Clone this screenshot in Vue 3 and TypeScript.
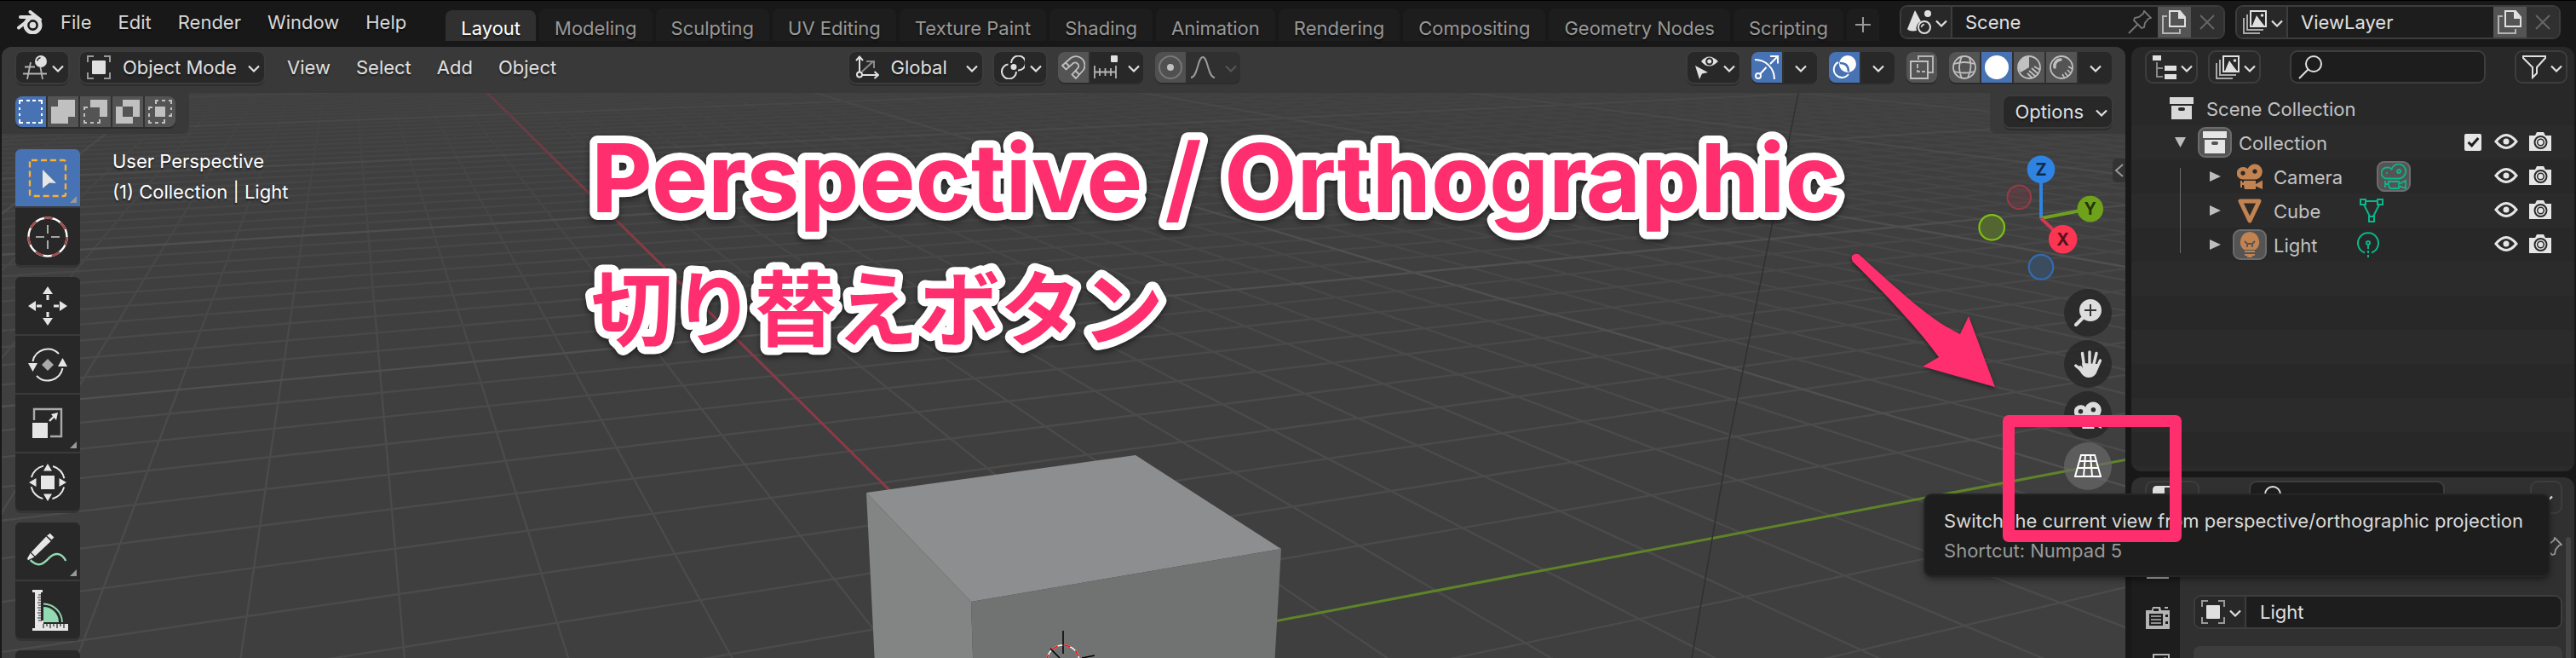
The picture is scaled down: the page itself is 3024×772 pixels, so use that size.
<script setup lang="ts">
import { ref } from 'vue'

interface Segment { x1: number; y1: number; x2: number; y2: number }
interface Tool { icon: string; label: string; more?: boolean }
interface OutlinerRow { name: string; icon: string; data: string; iconActive?: boolean; dataActive?: boolean }

const menus = ['File', 'Edit', 'Render', 'Window', 'Help']
const workspaces = [
  'Layout', 'Modeling', 'Sculpting', 'UV Editing', 'Texture Paint', 'Shading',
  'Animation', 'Rendering', 'Compositing', 'Geometry Nodes', 'Scripting',
]
const workspace = ref('Layout')

const viewportMenus = ['View', 'Select', 'Add', 'Object']
const selectModes = [
  { icon: 'sel-set', label: 'Set selection' },
  { icon: 'sel-extend', label: 'Extend selection' },
  { icon: 'sel-subtract', label: 'Subtract selection' },
  { icon: 'sel-invert', label: 'Invert selection' },
  { icon: 'sel-intersect', label: 'Intersect selection' },
]
const selectMode = ref('sel-set')

const shadings = [
  { icon: 'wire', label: 'Wireframe' },
  { icon: 'solid', label: 'Solid' },
  { icon: 'material', label: 'Material Preview' },
  { icon: 'rendered', label: 'Rendered' },
]
const shading = ref('solid')

const toolGroups: Tool[][] = [
  [{ icon: 'select-box', label: 'Select Box', more: true }, { icon: 'cursor', label: 'Cursor' }],
  [
    { icon: 'move', label: 'Move' },
    { icon: 'rotate', label: 'Rotate' },
    { icon: 'scale', label: 'Scale', more: true },
    { icon: 'transform', label: 'Transform' },
  ],
  [{ icon: 'annotate', label: 'Annotate', more: true }, { icon: 'measure', label: 'Measure' }],
  [{ icon: 'add-cube', label: 'Add Cube' }],
]
const tool = ref('select-box')

const navButtons = [
  { icon: 'zoom', label: 'Zoom' },
  { icon: 'hand', label: 'Move view' },
  { icon: 'movie', label: 'Camera view' },
  { icon: 'grid', label: 'Perspective / Orthographic' },
]

const rows: OutlinerRow[] = [
  { name: 'Camera', icon: 'movie', data: 'movie-line', dataActive: true },
  { name: 'Cube', icon: 'mesh', data: 'mesh-line' },
  { name: 'Light', icon: 'bulb', data: 'light-line', iconActive: true },
]

const sceneName = ref('Scene')
const layerName = ref('ViewLayer')
const objectName = ref('Light')
const search = ref('')
const propertySearch = ref('')
const collectionOn = ref(true)

// Floor plane projection: world origin, the two vanishing points and the depth slopes per metre.
const origin = { x: 1248, y: 776 }
const vanishX = { x: 404, y: -57 }
const vanishY = { x: 5640, y: -57 }
const slopeX = 0.0841
const slopeY = 0.0369
const nearest = 0.15
const far = 600

function project(x: number, y: number) {
  const w = 1 - slopeX * x + slopeY * y
  return {
    x: (origin.x - slopeX * x * vanishX.x + slopeY * y * vanishY.x) / w,
    y: (origin.y - slopeX * x * vanishX.y + slopeY * y * vanishY.y) / w,
  }
}
function lineAtX(x: number): Segment {
  const a = project(x, (nearest - 1 + slopeX * x) / slopeY)
  const b = project(x, far)
  return { x1: a.x, y1: a.y, x2: b.x, y2: b.y }
}
function lineAtY(y: number): Segment {
  const a = project((1 + slopeY * y - nearest) / slopeX, y)
  const b = project(-far, y)
  return { x1: a.x, y1: a.y, x2: b.x, y2: b.y }
}

const minor: Segment[] = []
const major: Segment[] = []
for (let i = -60; i <= 8; i++) if (i % 10) minor.push(lineAtX(i))
for (let i = -24; i <= 110; i++) if (i % 10) minor.push(lineAtY(i))
for (let i = -150; i < 0; i += 10) major.push(lineAtX(i))
for (let i = -20; i <= 300; i += 10) if (i) major.push(lineAtY(i))
const xAxis = lineAtY(0)
const yAxis = lineAtX(0)
</script>

<template>
  <div class="app">
    <svg class="sprite" aria-hidden="true">
      <defs>
        <symbol id="blender" viewBox="0 0 30 28">
          <g fill="none" stroke="currentColor" stroke-linecap="round">
            <circle cx="18.5" cy="17.500" r="8.700" stroke-width="4.600" />
            <path d="M15.500 2 27 11" stroke-width="4" />
            <path d="M4 8H18" stroke-width="4" />
            <path d="M2 20.500 13 12" stroke-width="4" />
          </g>
          <circle cx="18.500" cy="17.500" r="3.800" fill="currentColor" />
        </symbol>
        <symbol id="chevron" viewBox="0 0 14 28"><path d="M1 12.500 7 18.500 13 12.500" fill="none" stroke="currentColor" stroke-width="2.200" /></symbol>
        <symbol id="editor" viewBox="0 0 28 28">
          <path d="M9 8 5 28M20.500 14 23 28M2 13.500H14M0 21.500H28" fill="none" stroke="#b4b4b4" stroke-width="1.800" />
          <circle cx="21" cy="7" r="7" fill="currentColor" /><path d="M16.500 6.500C17 4 18.500 3 20.500 2.700" fill="none" stroke="#282828" stroke-width="1.400" />
        </symbol>
        <symbol id="object" viewBox="0 0 28 28">
          <rect x="6" y="6" width="16" height="16" rx="1" fill="currentColor" />
          <path d="M1 8V1H8M20 1H27V8M27 20V27H20M8 27H1V20" fill="none" stroke="#999" stroke-width="2" />
        </symbol>
        <symbol id="axes" viewBox="0 0 28 28">
          <g fill="none" stroke="currentColor" stroke-width="2"><path d="M5 1V20M1 6 5 1.500 9 6M8 23H27M22.500 19 27 23 22.500 27" /><circle cx="5" cy="22.500" r="3" /></g>
          <path d="M8 19 21 7M13 7H22V15" fill="none" stroke="#8a8a8a" stroke-width="2" />
        </symbol>
        <symbol id="pivot" viewBox="0 0 28 28">
          <path d="M12 9A8.500 8.500 0 1 1 20 17.500M8.500 10.500A8.500 8.500 0 1 0 18 19" fill="none" stroke="currentColor" stroke-width="2" />
          <circle cx="15" cy="13.500" r="3.500" fill="currentColor" />
        </symbol>
        <symbol id="magnet" viewBox="0 0 28 28"><path d="M1 12 11 3A10.500 10.500 0 0 1 26 17L17 27 12.500 22.500 20 14A4.200 4.200 0 0 0 14 9L5.500 16.500ZM5 8.500 9.500 13M21 22.500 16.500 18" fill="none" stroke="currentColor" stroke-width="1.800" /></symbol>
        <symbol id="increment" viewBox="0 0 28 28"><path d="M1 12V27M7 15V24M13.500 15V24M20 15V24M26 12V27M1 19.500H26" fill="none" stroke="#b4b4b4" stroke-width="1.800" /><rect x="20" width="8" height="8" rx="1" fill="currentColor" /></symbol>
        <symbol id="proportional" viewBox="0 0 28 28"><circle cx="14" cy="14" r="13" fill="none" stroke="#777" stroke-width="2" /><circle cx="14" cy="14" r="4" fill="currentColor" /></symbol>
        <symbol id="falloff" viewBox="0 0 28 28"><path d="M0 26C8 26 8 2 14 2S20 26 28 26" fill="none" stroke="#999" stroke-width="2" /></symbol>
        <symbol id="visibility" viewBox="0 0 28 28">
          <path d="M8 7Q17 -4 28 7Q17 18 8 7Z" fill="currentColor" /><circle cx="17.700" cy="7" r="4.500" fill="#282828" /><circle cx="17.700" cy="7" r="2.500" fill="currentColor" />
          <path d="M1 12 16 20 9 21.500 6 28Z" fill="currentColor" />
        </symbol>
        <symbol id="gizmo" viewBox="0 0 28 28"><g fill="none" stroke="currentColor" stroke-width="2"><path d="M0 5C13 5 23 15 23 28M6.500 21.500 13.500 14M18 10 26.500 1.500M18 1H27V9.500" /><circle cx="4" cy="24" r="3" /></g></symbol>
        <symbol id="overlay" viewBox="0 0 28 28">
          <circle cx="18" cy="10" r="10" fill="currentColor" />
          <path d="M7 8A9.500 9.500 0 1 0 19 22" fill="none" stroke="currentColor" stroke-width="2" />
          <path d="M9 9C15 9 19 12 19 19" fill="none" stroke="#4772b3" stroke-width="2.500" />
        </symbol>
        <symbol id="xray" viewBox="0 0 28 28"><path d="M10 5V1H27V20H22" fill="none" stroke="#b4b4b4" stroke-width="2" /><path d="M1 7H21V27H1Z" fill="none" stroke="currentColor" stroke-width="2" /><path d="M9 10V19H18" fill="none" stroke="#b4b4b4" stroke-width="2" stroke-dasharray="5 2" /></symbol>
        <symbol id="wire" viewBox="0 0 28 28"><g fill="none" stroke="currentColor" stroke-width="1.800"><circle cx="14" cy="14" r="13" /><path d="M2 10Q14 6 26 10M2 19Q14 22 26 19M11 1Q5 14 11 27M20 3Q24 14 18 26" /></g></symbol>
        <symbol id="solid" viewBox="0 0 28 28"><circle cx="14" cy="14" r="14" fill="currentColor" /></symbol>
        <symbol id="material" viewBox="0 0 28 28"><circle cx="14" cy="14" r="13" fill="none" stroke="currentColor" stroke-width="1.800" /><path d="M14 1V14L4 20C-1 14 2 2 14 1Z" fill="currentColor" /><path d="M14 18 22 25M17 15 25 22M20 13 27 17M12 21 18 27" stroke="currentColor" stroke-width="1.800" /></symbol>
        <symbol id="rendered" viewBox="0 0 28 28"><circle cx="14" cy="14" r="13" fill="none" stroke="currentColor" stroke-width="1.800" /><path d="M6 14C5 9 9 5 13 5" fill="none" stroke="currentColor" stroke-width="3.500" stroke-linecap="round" /><path d="M15 22 18 27M18 20 22 25M21 17 25 21M22 13 27 16" stroke="currentColor" stroke-width="1.600" /></symbol>
        <symbol id="sel-set" viewBox="0 0 28 28"><path d="M1 5V1H5M9 1H13M16 1H20M23 1H27V5M27 9V12M27 16V19M27 23V27H23M20 27H16M13 27H9M5 27H1V23M1 19V16M1 12V9" fill="none" stroke="currentColor" stroke-width="2" /></symbol>
        <symbol id="sel-extend" viewBox="0 0 28 28"><path d="M8 0H28V20H20V28H0V8H8Z" fill="currentColor" /></symbol>
        <symbol id="sel-subtract" viewBox="0 0 28 28"><path d="M8 0H28V20H19V9H8Z" fill="currentColor" /><path d="M5 9H1V12M1 16V20M1 24V27H4M8 27H12M16 27H19V23" fill="none" stroke="currentColor" stroke-width="2" /></symbol>
        <symbol id="sel-invert" viewBox="0 0 28 28"><path d="M8 0H28V20H20V28H0V8H8ZM8 8V20H20V8Z" fill="currentColor" fill-rule="evenodd" /></symbol>
        <symbol id="sel-intersect" viewBox="0 0 28 28"><path d="M8 8H20V20H8Z" fill="currentColor" /><path d="M9 5V1H12M16 1H20M24 1H27V5M27 9V12M27 16V19H24M5 9H1V12M1 16V20M1 24V27H4M8 27H12M16 27H19V23" fill="none" stroke="currentColor" stroke-width="2" /></symbol>

        <symbol id="select-box" viewBox="0 0 48 48">
          <rect x="3" y="3" width="42" height="42" rx="2" fill="none" stroke="#ffb02e" stroke-width="2.400" stroke-dasharray="7 4" />
          <path d="M18 14 34 30 26 29.500 18 36Z" fill="#e6e6e6" />
        </symbol>
        <symbol id="cursor" viewBox="0 0 48 48">
          <circle cx="24" cy="24" r="22.500" fill="none" stroke="#fff" stroke-width="2.400" /><circle cx="24" cy="24" r="22.500" fill="none" stroke="#a04848" stroke-width="2.400" stroke-dasharray="10.100 10.100" />
          <path d="M24 10V20M24 28V38M10 24H20M28 24H38" stroke="#ccc" stroke-width="1.600" />
        </symbol>
        <symbol id="move" viewBox="0 0 48 48"><g fill="currentColor"><path d="M24 1 30 10H18ZM24 47 18 38H30ZM1 24 10 18V30ZM47 24 38 30V18Z" /><path d="M22.500 11H25.500V17H22.500ZM22.500 31H25.500V37H22.500ZM11 22.500H17V25.500H11ZM31 22.500H37V25.500H31Z" /></g></symbol>
        <symbol id="rotate" viewBox="0 0 48 48"><path d="M6.500 20A18 18 0 0 1 37 11M41.500 28A18 18 0 0 1 11 37" fill="none" stroke="currentColor" stroke-width="2" /><path d="M1 22H12L6.500 32ZM36 26H47L41.500 16Z" fill="currentColor" /><path d="M24 17 31 24 24 31 17 24Z" fill="#aaa" /></symbol>
        <symbol id="scale" viewBox="0 0 48 48"><path d="M8 20V7H40V39H27" fill="none" stroke="#aaa" stroke-width="2.400" /><path d="M6 23H24V41H6Z" fill="currentColor" /><path d="M26 21 33 14" stroke="currentColor" stroke-width="2.400" /><path d="M36 11 34 20 28 13Z" fill="currentColor" /></symbol>
        <symbol id="transform" viewBox="0 0 48 48"><circle cx="24" cy="24" r="20" fill="none" stroke="currentColor" stroke-width="2" stroke-dasharray="20 11.400" stroke-dashoffset="-5.700" /><path d="M16 16H32V32H16ZM24 2 29 10.500H19ZM24 46 19 37.500H29ZM2 24 10.500 19V29ZM46 24 37.500 29V19Z" fill="currentColor" /></symbol>
        <symbol id="annotate" viewBox="0 0 52 48"><path d="M4 35C15 46 22 38 28 32S43 24 49 36" fill="none" stroke="#92dbb2" stroke-width="2.600" /><path d="M29 1 34 6 31 9 25 4ZM24 5 30 11 10 30 5 25ZM4 26 9 31 1 35 0 33Z" fill="currentColor" /></symbol>
        <symbol id="measure" viewBox="0 0 48 48"><path d="M6 0H18V3H16V36H19V40H48V48H6V45H9V3H6Z" fill="currentColor" /><path d="M13 6H17M12 9H17M13 12H17M12 15H17M13 18H17M12 21H17M13 24H17M12 27H17M13 30H17M12 33H17M13 36H17M19 40V45M23 40V43M27 40V45M31 40V43M35 40V45M39 40V43M43 40V45" stroke="#282828" stroke-width="1.200" /><path d="M19 38V20A18 18 0 0 1 37 38Z" fill="#92dbb2" /><path d="M19 16.500A22 22 0 0 1 41 38" fill="none" stroke="#92dbb2" stroke-width="1.800" /></symbol>
        <symbol id="add-cube" viewBox="0 0 48 48"><path d="M24 4 42 14V34L24 44 6 34V14Z" fill="#92dbb2" /></symbol>

        <symbol id="zoom" viewBox="0 0 32 32"><circle cx="19" cy="13" r="13" fill="currentColor" /><path d="M12 20 2 30" stroke="currentColor" stroke-width="4" stroke-linecap="round" /><path d="M19 6V20M12 13H26" stroke="#333" stroke-width="2" /></symbol>
        <symbol id="hand" viewBox="0 0 32 32"><g fill="none" stroke="currentColor" stroke-width="3.400" stroke-linecap="round"><path d="M9.500 3.500 11.500 18M18 2V18M26 3.500 22.500 18M30.500 12 26 22M1.800 18 9 24" /></g><path d="M9 15 27 16C29 22 26 32 17.500 32 9 32 7 24 3 19L8 18 10 21Z" fill="currentColor" /></symbol>
        <symbol id="movie" viewBox="0 0 30 30"><path fill="currentColor" fill-rule="evenodd" d="M7 4A7 7 0 0 1 12.500 6 9 9 0 1 1 21 18.500H7A7 7 0 0 1 7 4ZM7 8.500A2.600 2.600 0 1 0 7 13.700 2.600 2.600 0 0 0 7 8.500ZM21 6.500A2.600 2.600 0 1 0 21 11.700 2.600 2.600 0 0 0 21 6.500ZM4 20H6V22H8V20H22V24L30 19.500V30L22 26.500V30H9L8 25H6V28H4Z" /></symbol>
        <symbol id="movie-line" viewBox="0 0 30 30"><g fill="none" stroke="currentColor" stroke-width="1.800"><path d="M7 4.500A6.500 6.500 0 0 1 12.500 6.500 8.500 8.500 0 1 1 21 17.500H7A6.500 6.500 0 0 1 7 4.500Z" /><circle cx="21" cy="9" r="2" /><path d="M5 20V28M5 24H9M9 21H21V24L29 20V29L21 26V29H11L9 26Z" /></g><circle cx="7" cy="11" r="1" fill="currentColor" /></symbol>
        <symbol id="grid" viewBox="0 0 32 28"><path d="M8 1H24L31 26H1ZM6 8H26M4 16H28M13 1 11 26M19 1 21 26" fill="none" stroke="currentColor" stroke-width="2" /></symbol>

        <symbol id="scene" viewBox="0 0 28 28"><path d="M9 0 16 13A9 9 0 0 0 11 24C5 25 1 24 0 22Z" fill="currentColor" /><circle cx="24" cy="4" r="4" fill="currentColor" /><circle cx="20" cy="20" r="7" fill="none" stroke="currentColor" stroke-width="2" /><path d="M16.500 20Q17 17 20 16.500" fill="none" stroke="currentColor" stroke-width="1.500" /></symbol>
        <symbol id="layers" viewBox="0 0 28 28"><path d="M9 1H27V19H9Z" fill="none" stroke="currentColor" stroke-width="2" /><path d="M11 18 16 6 21 13 25 18Z" fill="currentColor" /><circle cx="22.500" cy="6" r="1.800" fill="currentColor" /><path d="M5 5V23H24M1 9V27H20" fill="none" stroke="#aaa" stroke-width="2" /></symbol>
        <symbol id="pin" viewBox="0 0 28 28"><path d="M19 1 27 9 24 10 20 15 19 20 16 21 7 12 8 9 13 8 18 4ZM11 17 1 27" fill="none" stroke="currentColor" stroke-width="1.800" /></symbol>
        <symbol id="copy" viewBox="0 0 28 28"><path d="M9 1H21L27 8V19H9ZM20 1V9H27" fill="none" stroke="currentColor" stroke-width="2" /><path d="M20 1V9H27Z" fill="currentColor" /><path d="M6 7H1V27H21V22" fill="none" stroke="#b4b4b4" stroke-width="2" /></symbol>
        <symbol id="cross" viewBox="0 0 28 28"><path d="M6 6 22 22M22 6 6 22" stroke="currentColor" stroke-width="2" /></symbol>
        <symbol id="plus" viewBox="0 0 20 20"><path d="M10 1V19M1 10H19" stroke="currentColor" stroke-width="2" /></symbol>
        <symbol id="tree" viewBox="0 0 28 28"><path d="M0 0H10V6H0ZM14 12H28V18H14ZM14 22H28V28H14Z" fill="currentColor" /><path d="M5 8V25H12M5 15H12" fill="none" stroke="#888" stroke-width="2" /></symbol>
        <symbol id="search" viewBox="0 0 28 28"><circle cx="18" cy="10" r="9" fill="none" stroke="currentColor" stroke-width="2" /><path d="M11.500 16.500 1 27" stroke="currentColor" stroke-width="2" /></symbol>
        <symbol id="funnel" viewBox="0 0 28 28"><path d="M1 1H27V3L17 14V21L12 26V14L1 3Z" fill="none" stroke="currentColor" stroke-width="2" /></symbol>
        <symbol id="box" viewBox="0 0 28 28"><path fill="currentColor" fill-rule="evenodd" d="M0 1H28V9H0ZM2 11H26V27H2ZM12 13A2 2 0 0 0 12 17H16A2 2 0 0 0 16 13Z" /></symbol>
        <symbol id="mesh" viewBox="0 0 30 30"><path d="M4 4H26L15 27Z" fill="none" stroke="currentColor" stroke-width="5" stroke-linejoin="round" /></symbol>
        <symbol id="mesh-line" viewBox="0 0 30 30"><path d="M2 2H8V8H2ZM22 2H28V8H22ZM12 22H18V28H12ZM8 4H22M6 8 13 22M24 8 17 22" fill="none" stroke="currentColor" stroke-width="2" /></symbol>
        <symbol id="bulb" viewBox="0 0 30 30"><path d="M15 0A12 12 0 0 1 22 21H8A12 12 0 0 1 15 0ZM9 22H21V24H9ZM9 26H21V28H18V30H12V28H9Z" fill="currentColor" /><path d="M9 11 12 14H18L21 11M12 14V18M18 14V18" fill="none" stroke="#545454" stroke-width="1.800" /></symbol>
        <symbol id="light-line" viewBox="0 0 30 30"><path d="M11 24.500A12 12 0 1 1 19 24.500" fill="none" stroke="currentColor" stroke-width="2" /><circle cx="15" cy="13" r="2" fill="none" stroke="currentColor" stroke-width="2" /><path d="M15 16V20M15 22V25M15 27V30" stroke="currentColor" stroke-width="2" /></symbol>
        <symbol id="eye" viewBox="0 0 28 28"><path d="M2 13Q14 -2 26 13Q14 28 2 13Z" fill="none" stroke="currentColor" stroke-width="3" /><circle cx="14" cy="13" r="3.500" fill="currentColor" /></symbol>
        <symbol id="photo" viewBox="0 0 28 28"><path d="M1 6H8L10 2H18L20 6H27V24H1Z" fill="currentColor" /><circle cx="14.500" cy="14" r="7" fill="none" stroke="#2a2a2a" stroke-width="2" /><circle cx="14.500" cy="14" r="3.800" fill="none" stroke="#2a2a2a" stroke-width="1.500" /></symbol>
        <symbol id="output" viewBox="0 0 28 28"><path fill="currentColor" fill-rule="evenodd" d="M7 5 8 1H17L18 5H28V27H0V5ZM9 3V6H15V3ZM4 9V23H20V9ZM23 10V13H26V10ZM23 18V21H26V18ZM22 1H26V3H22Z" /><path d="M6 12H18M6 16H18M6 20H18" stroke="currentColor" stroke-width="1.500" /></symbol>
        <symbol id="properties" viewBox="0 0 28 28"><path d="M5 0H14V28H0V5Q0 0 5 0Z" fill="currentColor" /><path d="M14 1H28V28" fill="none" stroke="currentColor" stroke-width="2" /></symbol>
      </defs>
    </svg>

    <header class="topbar">
      <nav class="menus" aria-label="Main menu">
        <button class="logo" type="button" aria-label="Blender"><svg><use href="#blender" /></svg></button>
        <button v-for="m in menus" :key="m" type="button" class="menu">{{ m }}</button>
      </nav>
      <div class="tabs" role="tablist">
        <button v-for="w in workspaces" :key="w" type="button" role="tab" class="tab" :class="{ active: w === workspace }" :aria-selected="w === workspace" @click="workspace = w">{{ w }}</button>
        <button type="button" class="tab add" aria-label="Add workspace"><svg><use href="#plus" /></svg></button>
      </div>
      <div class="ids">
        <div class="idblock">
          <button type="button" class="pick" aria-label="Browse scenes"><svg class="icon"><use href="#scene" /></svg><svg class="chev"><use href="#chevron" /></svg></button>
          <input v-model="sceneName" aria-label="Scene name">
          <button type="button" class="pin" aria-label="Pin scene"><svg class="icon"><use href="#pin" /></svg></button>
          <button type="button" class="copy" aria-label="New scene"><svg class="icon"><use href="#copy" /></svg></button>
          <button type="button" class="del" aria-label="Delete scene"><svg class="icon"><use href="#cross" /></svg></button>
        </div>
        <div class="idblock">
          <button type="button" class="pick" aria-label="Browse view layers"><svg class="icon"><use href="#layers" /></svg><svg class="chev"><use href="#chevron" /></svg></button>
          <input v-model="layerName" aria-label="View layer name">
          <button type="button" class="copy" aria-label="New view layer"><svg class="icon"><use href="#copy" /></svg></button>
          <button type="button" class="del" aria-label="Delete view layer"><svg class="icon"><use href="#cross" /></svg></button>
        </div>
      </div>
    </header>

    <div class="work">
      <main class="viewport">
        <svg class="canvas" viewBox="2 55 2493 717" preserveAspectRatio="xMidYMin slice" aria-hidden="true">
          <defs>
            <linearGradient id="fadeMinor" gradientUnits="userSpaceOnUse" x1="0" y1="60" x2="0" y2="480">
              <stop offset="0" stop-color="#fff" stop-opacity=".1" /><stop offset=".3" stop-color="#fff" stop-opacity=".45" /><stop offset="1" stop-color="#fff" />
            </linearGradient>
            <linearGradient id="fadeMajor" gradientUnits="userSpaceOnUse" x1="0" y1="20" x2="0" y2="300">
              <stop offset="0" stop-color="#fff" stop-opacity=".1" /><stop offset="1" stop-color="#fff" />
            </linearGradient>
            <mask id="maskMinor" maskUnits="userSpaceOnUse" x="0" y="0" width="2500" height="800"><rect width="2500" height="800" fill="url(#fadeMinor)" /></mask>
            <mask id="maskMajor" maskUnits="userSpaceOnUse" x="0" y="0" width="2500" height="800"><rect width="2500" height="800" fill="url(#fadeMajor)" /></mask>
          </defs>
          <g mask="url(#maskMinor)" stroke="#4b4b4b" stroke-width="2.400"><line v-for="(s, i) in minor" :key="i" v-bind="s" /></g>
          <g mask="url(#maskMajor)">
            <g stroke="#505050" stroke-width="2.400"><line v-for="(s, i) in major" :key="i" v-bind="s" /></g>
            <line v-bind="xAxis" stroke="#8b3a47" stroke-width="3" />
            <line v-bind="yAxis" stroke="#5f8428" stroke-width="3" />
          </g>
          <path d="M2122 55 2030 515 1986 772" fill="none" stroke="#303030" stroke-width="1.500" />
          <path d="M1017 578 1333 534 1504 644 1140 706Z" fill="#8d8e90" />
          <path d="M1017 578 1140 706 1143 800H1028Z" fill="#828584" />
          <path d="M1140 706 1504 644 1495 800H1143Z" fill="#717372" />
          <circle cx="1248" cy="776" r="19" fill="none" stroke="#fff" stroke-width="1.500" /><circle cx="1248" cy="776" r="19" fill="none" stroke="#f00" stroke-width="1.500" stroke-dasharray="7.500 7.500" />
          <path d="M1248 740V767M1233 761 1244 772M1270 772 1285 769" stroke="#000" stroke-width="1.500" />
        </svg>

        <div class="vheader">
          <div class="vleft">
            <button type="button" class="ctl" aria-label="Editor type"><svg class="icon"><use href="#editor" /></svg><svg class="chev"><use href="#chevron" /></svg></button>
            <label class="ctl mode"><svg class="icon"><use href="#object" /></svg><select aria-label="Mode"><option>Object Mode</option></select><svg class="chev"><use href="#chevron" /></svg></label>
            <div class="vmenus"><button v-for="m in viewportMenus" :key="m" type="button" class="menu">{{ m }}</button></div>
          </div>
          <div class="vmid">
            <label class="ctl orient"><svg class="icon"><use href="#axes" /></svg><select aria-label="Transform orientation"><option>Global</option></select><svg class="chev"><use href="#chevron" /></svg></label>
            <button type="button" class="ctl" aria-label="Pivot point"><svg class="icon"><use href="#pivot" /></svg><svg class="chev"><use href="#chevron" /></svg></button>
            <div class="joined">
              <button type="button" class="cell off" aria-label="Snap"><svg class="icon"><use href="#magnet" /></svg></button>
              <button type="button" class="cell wide" aria-label="Snap to"><svg class="icon"><use href="#increment" /></svg><svg class="chev"><use href="#chevron" /></svg></button>
            </div>
            <div class="joined faded">
              <button type="button" class="cell off" aria-label="Proportional editing"><svg class="icon"><use href="#proportional" /></svg></button>
              <button type="button" class="cell wide" aria-label="Falloff"><svg class="icon"><use href="#falloff" /></svg><svg class="chev"><use href="#chevron" /></svg></button>
            </div>
          </div>
          <div class="vright">
            <button type="button" class="ctl" aria-label="Object types visibility"><svg class="icon"><use href="#visibility" /></svg><svg class="chev"><use href="#chevron" /></svg></button>
            <div class="joined">
              <button type="button" class="cell on" aria-label="Show gizmos"><svg class="icon"><use href="#gizmo" /></svg></button>
              <button type="button" class="cell" aria-label="Gizmo options"><svg class="chev"><use href="#chevron" /></svg></button>
            </div>
            <div class="joined">
              <button type="button" class="cell on" aria-label="Show overlays"><svg class="icon"><use href="#overlay" /></svg></button>
              <button type="button" class="cell" aria-label="Overlay options"><svg class="chev"><use href="#chevron" /></svg></button>
            </div>
            <div class="joined"><button type="button" class="cell off" aria-label="Toggle X-ray"><svg class="icon"><use href="#xray" /></svg></button></div>
            <div class="joined">
              <button v-for="s in shadings" :key="s.icon" type="button" class="cell" :class="s.icon === shading ? 'on' : 'off'" :aria-label="s.label" @click="shading = s.icon"><svg class="icon"><use :href="'#' + s.icon" /></svg></button>
              <button type="button" class="cell" aria-label="Shading options"><svg class="chev"><use href="#chevron" /></svg></button>
            </div>
          </div>
        </div>

        <div class="subheader">
          <div class="region start">
            <div class="joined">
              <button v-for="s in selectModes" :key="s.icon" type="button" class="cell" :class="s.icon === selectMode ? 'on' : 'off'" :aria-label="s.label" @click="selectMode = s.icon"><svg class="icon"><use :href="'#' + s.icon" /></svg></button>
            </div>
          </div>
          <div class="region end"><button type="button" class="ctl options">Options<svg class="chev"><use href="#chevron" /></svg></button></div>
        </div>

        <div class="stage">
          <div class="toolbar" role="toolbar" aria-label="Tools">
            <div v-for="(g, i) in toolGroups" :key="i" class="toolgroup">
              <button v-for="t in g" :key="t.icon" type="button" class="tool" :class="{ on: t.icon === tool, more: t.more }" :aria-label="t.label" @click="tool = t.icon"><svg><use :href="'#' + t.icon" /></svg></button>
            </div>
          </div>
          <div class="info"><p>User Perspective</p><p>(1) Collection | Light</p></div>
          <div class="nav">
            <svg class="orbit" viewBox="0 0 166 160" role="img" aria-label="Orientation gizmo">
              <circle cx="57" cy="55" r="14" fill="#c8374a" fill-opacity=".15" stroke="#9a3a48" stroke-width="2" />
              <circle cx="24.500" cy="91" r="15" fill="#536631" stroke="#7fbf14" stroke-width="2.200" />
              <circle cx="83" cy="138" r="14.500" fill="#3b4c5e" stroke="#326cb5" stroke-width="2.200" />
              <path d="M83 80V30" stroke="#2f83e3" stroke-width="4" />
              <path d="M83 80 141 69" stroke="#6fa21b" stroke-width="4" />
              <path d="M83 80 109 105" stroke="#d63850" stroke-width="4" />
              <circle cx="83" cy="22" r="16.500" fill="#2f83e3" /><circle cx="141.500" cy="69" r="15.500" fill="#6fa21b" /><circle cx="109" cy="105" r="17" fill="#fb3552" />
              <g font-family="Inter, sans-serif" font-size="20" font-weight="700" text-anchor="middle">
                <text x="83" y="29" fill="#0f2b4b">Z</text><text x="141.500" y="76" fill="#243609">Y</text><text x="109" y="112" fill="#53121b">X</text>
              </g>
            </svg>
            <button v-for="n in navButtons" :key="n.icon" type="button" class="navbtn" :class="{ hover: n.icon === 'grid' }" :aria-label="n.label"><svg><use :href="'#' + n.icon" /></svg></button>
          </div>
        </div>
        <button type="button" class="sidetoggle" aria-label="Show sidebar"><svg viewBox="0 0 14 28"><path d="M12 7 4 14 12 21" fill="none" stroke="#999" stroke-width="2" /></svg></button>
      </main>

      <aside class="side">
        <section class="outliner" aria-label="Outliner">
          <div class="phead">
            <button type="button" class="box" aria-label="Outliner editor"><svg class="icon"><use href="#tree" /></svg><svg class="chev"><use href="#chevron" /></svg></button>
            <button type="button" class="box" aria-label="Display mode"><svg class="icon"><use href="#layers" /></svg><svg class="chev"><use href="#chevron" /></svg></button>
            <label class="searchbox"><svg class="icon"><use href="#search" /></svg><input v-model="search" aria-label="Search outliner"></label>
            <button type="button" class="box" aria-label="Filter"><svg class="icon"><use href="#funnel" /></svg><svg class="chev"><use href="#chevron" /></svg></button>
          </div>
          <ul class="rows">
            <li class="row root"><svg class="icon"><use href="#box" /></svg><span class="name">Scene Collection</span></li>
            <li class="row coll">
              <button type="button" class="twist open" aria-label="Collapse Collection"></button>
              <span class="chip act"><svg class="icon"><use href="#box" /></svg></span><span class="name">Collection</span>
              <span class="toggles">
                <input v-model="collectionOn" type="checkbox" aria-label="Include Collection">
                <button type="button" aria-label="Hide Collection"><svg class="icon"><use href="#eye" /></svg></button>
                <button type="button" aria-label="Disable Collection in renders"><svg class="icon"><use href="#photo" /></svg></button>
              </span>
            </li>
            <li v-for="r in rows" :key="r.name" class="row child">
              <button type="button" class="twist" :aria-label="'Expand ' + r.name"></button>
              <span class="chip orange" :class="{ act: r.iconActive }"><svg><use :href="'#' + r.icon" /></svg></span><span class="name">{{ r.name }}</span>
              <span class="chip green" :class="{ act: r.dataActive }"><svg><use :href="'#' + r.data" /></svg></span>
              <span class="toggles">
                <button type="button" :aria-label="'Hide ' + r.name"><svg class="icon"><use href="#eye" /></svg></button>
                <button type="button" :aria-label="'Disable ' + r.name + ' in renders'"><svg class="icon"><use href="#photo" /></svg></button>
              </span>
            </li>
          </ul>
        </section>

        <section class="properties" aria-label="Properties">
          <div class="phead">
            <button type="button" class="box" aria-label="Properties editor"><svg class="icon"><use href="#properties" /></svg><svg class="chev"><use href="#chevron" /></svg></button>
            <label class="searchbox"><svg class="icon"><use href="#search" /></svg><input v-model="propertySearch" aria-label="Search properties"></label>
            <button type="button" class="box" aria-label="Options"><svg class="chev"><use href="#chevron" /></svg></button>
          </div>
          <div class="pbody">
            <div class="ptabs">
              <button type="button" aria-label="Render"><svg class="icon"><use href="#photo" /></svg></button>
              <button type="button" aria-label="Output"><svg class="icon"><use href="#output" /></svg></button>
              <button type="button" aria-label="View layer"><svg class="icon"><use href="#layers" /></svg></button>
            </div>
            <div class="pcontent">
              <button type="button" class="ppin" aria-label="Pin"><svg class="icon"><use href="#pin" /></svg></button>
              <div class="field">
                <button type="button" class="pick" aria-label="Browse objects"><svg class="icon"><use href="#object" /></svg><svg class="chev"><use href="#chevron" /></svg></button>
                <input v-model="objectName" aria-label="Object name">
              </div>
              <div class="panel"></div>
            </div>
            <div class="scroll"></div>
          </div>
        </section>
      </aside>
    </div>

    <div class="tip" role="tooltip"><p>Switch the current view from perspective/orthographic projection</p><p class="dim">Shortcut: Numpad 5</p></div>

    <svg class="headline" viewBox="0 0 1560 330">
      <text x="14" y="129">Perspective / Orthographic</text>
      <text class="jp" x="14" y="278" lang="ja">切り替えボタン</text>
    </svg>
    <svg class="arrow" viewBox="0 0 180 164" aria-hidden="true"><path d="M11 3C8 0 3 0 1 4 0 6 1 9 3 11 50 57 85 97 103 122L84 133 169 157 138 74 128 95C95 80 55 43 11 3Z" fill="#ff2e6e" /></svg>
    <div class="mark"></div>
  </div>
</template>

<style>
html, body { margin: 0; background: #181818; }
</style>

<style scoped>
.app { position: relative; display: flex; flex-direction: column; height: 100vh; overflow: hidden; background: #181818; color: #e0e0e0; font: 22px/28px Inter, "Noto Sans CJK JP", sans-serif; box-sizing: border-box; border-top: 1px solid #000; }
.app *, .app *::before, .app *::after { box-sizing: border-box; }
.sprite { position: absolute; width: 0; height: 0; }
button, input, select { font: inherit; color: inherit; background: none; border: 0; padding: 0; margin: 0; border-radius: 0; outline: 0; min-width: 0; }
select { appearance: none; }
p, ul { margin: 0; padding: 0; list-style: none; }
svg { display: block; flex: none; }
.icon { width: 28px; height: 28px; }
.chev { width: 14px; height: 28px; }

.topbar { display: flex; flex: none; height: 54px; padding-right: 18px; background: #181818; }
.menus { display: flex; align-items: center; gap: 31px; padding: 0 46px 4px 20px; }
.menu, .tab, .info, .ctl { text-shadow: 0 2px 2px rgba(0, 0, 0, .5); }
.menus .menu { color: #d8d8d8; }
.logo { margin-right: -10px; color: #ddd; }
.logo svg { width: 30px; height: 28px; }
.tabs { display: flex; gap: 4px; padding-top: 9px; height: 47px; }
.tab { padding: 7px 18px 0; background: #1d1d1d; color: #989898; border-radius: 8px 8px 0 0; white-space: nowrap; }
.tab.active { margin-top: 2px; padding-top: 5px; background: #303030; color: #fff; }
.tab.add { padding: 0 9px; }
.tab.add svg { width: 20px; height: 20px; }
.ids { display: flex; gap: 12px; margin-left: auto; padding-top: 5px; }
.idblock { display: flex; width: 382px; height: 40px; border: 2px solid #3d3d3d; border-radius: 9px; background: #1d1d1d; overflow: hidden; }
.idblock button, .field button { display: flex; align-items: center; }
.pick { flex: none; gap: 5px; width: 60px; padding-left: 7px; background: #282828; border-right: 2px solid #3d3d3d; }
.idblock input { flex: 1; padding-left: 15px; }
.pin { padding-right: 7px; color: #777; }
.idblock .copy { width: 39px; padding-left: 5px; background: #545454; }
.idblock .del { width: 38px; padding-left: 5px; background: #303030; color: #666; }

.work { display: flex; flex: 1; min-height: 0; gap: 7px; padding: 0 2px; }
.viewport { position: relative; flex: 1; display: flex; flex-direction: column; min-width: 0; overflow: hidden; background: #3f3f3f; border-radius: 12px 12px 0 0; }
.canvas { position: absolute; top: 0; left: 0; width: 100%; height: 100%; }
.vheader, .subheader, .stage { position: relative; }
.vheader { display: grid; grid-template-columns: 1fr auto 1fr; height: 54px; padding: 6px 16px 0 17px; background: rgba(56, 56, 56, .92); }
.vleft, .vmid, .vright { display: flex; align-items: flex-start; gap: 14px; }
.vmid { margin-right: 46px; }
.vright { justify-content: flex-end; }
.vmenus { display: flex; gap: 30px; padding: 4px 0 0 13px; }
.ctl { display: flex; align-items: center; height: 36px; gap: 6px; padding: 0 5px 0 8px; background: #282828; border-radius: 8px; box-shadow: 0 0 0 2px #3c3c3c, 0 3px 0 1px #2c2c2c; }
.mode { width: 216px; }
.mode select, .orient select { flex: 1; padding-left: 8px; text-shadow: inherit; }
.orient { width: 156px; padding-left: 7px; }
.joined { display: flex; gap: 2px; border-radius: 8px; background: #303030; overflow: hidden; box-shadow: 0 2px 0 #2c2c2c; }
.cell { display: flex; align-items: center; justify-content: center; width: 36px; height: 36px; background: #282828; }
.cell.wide { width: 62px; gap: 12px; }
.cell.off { background: #545454; color: #c0c0c0; }
.cell.on { background: #4772b3; color: #fff; }
.vright .joined .cell:last-child:not(.off) { width: 39px; }
.faded .cell { background: #303030; }
.faded .cell.off { background: #505050; }
.faded .chev { color: #555; }
.subheader { display: flex; justify-content: space-between; height: 48px; }
.region { padding: 4px 16px 8px; background: rgba(56, 56, 56, .92); }
.start { border-bottom-right-radius: 8px; }
.end { border-bottom-left-radius: 8px; }
.options { gap: 14px; padding: 0 5px 0 13px; }
.stage { display: flex; flex: 1; min-height: 0; padding: 14px 16px 0; }
.toolbar { display: flex; flex-direction: column; gap: 14px; padding-top: 4px; }
.toolgroup { display: flex; flex: none; flex-direction: column; gap: 2px; width: 76px; border-radius: 6px; background: #3a3a3a; overflow: hidden; box-shadow: 0 3px 0 #343434; }
.tool { position: relative; display: flex; align-items: center; justify-content: center; height: 67px; background: #282828; color: #e6e6e6; }
.tool svg { width: 48px; height: 48px; }
.tool.on { background: #4772b3; }
.tool.more::after { content: ""; position: absolute; right: 4px; bottom: 4px; border: 4px solid; border-color: transparent #999 #999 transparent; }
.info { padding-left: 38px; color: #fff; line-height: 36px; }
.nav { display: flex; flex-direction: column; align-items: flex-end; gap: 4px; margin-left: auto; padding-top: 6px; }
.orbit { width: 166px; height: 158px; }
.navbtn { display: flex; align-items: center; justify-content: center; width: 56px; height: 56px; border-radius: 50%; background: rgba(40, 40, 40, .85); color: #ddd; }
.navbtn svg { width: 32px; height: 32px; }
.navbtn.hover { background: rgba(106, 106, 106, .7); color: #fff; }
.sidetoggle { position: absolute; top: 131px; right: 0; width: 15px; height: 28px; background: #333; border-radius: 5px 0 0 5px; }
.sidetoggle svg { width: 14px; height: 28px; }

.side { display: flex; flex: none; flex-direction: column; gap: 7px; width: 520px; }
.outliner, .properties { overflow: hidden; border-radius: 12px; }
.outliner { flex: 0 0 498px; background: #282828; }
.phead { display: flex; gap: 12px; padding: 4px 8px 0 16px; height: 52px; }
.box { display: flex; align-items: center; gap: 5px; flex: none; width: 62px; height: 39px; padding-left: 7px; border: 2px solid #3d3d3d; border-radius: 9px; background: #282828; }
.searchbox { display: flex; align-items: center; flex: 0 1 230px; height: 39px; margin: 0 auto 0 22px; padding: 0 8px; border: 2px solid #3d3d3d; border-radius: 9px; background: #1d1d1d; }
.searchbox input { width: 100%; }
.rows { height: 446px; background: repeating-linear-gradient(#282828 0 40px, #2b2b2b 40px 80px); }
.row { position: relative; display: flex; align-items: center; height: 40px; padding-right: 26px; color: #c2c2c2; }
.name { padding-top: 2px; }
.root { padding-left: 45px; gap: 15px; }
.root .icon { color: #d8d8d8; }
.coll { padding-left: 51px; }
.child { padding-left: 92px; }
.child::before { content: ""; position: absolute; left: 57px; top: 0; bottom: 0; border-left: 1px solid #6a6a6a; }
.child:nth-child(3)::before { top: 10px; }
.child:last-child::before { bottom: 10px; }
.twist { flex: none; width: 13px; height: 12px; margin-right: 14px; background: #bdbdbd; clip-path: polygon(0 0, 100% 50%, 0 100%); }
.twist.open { clip-path: polygon(0 0, 100% 0, 50% 100%); }
.chip { display: flex; align-items: center; justify-content: center; flex: none; width: 40px; height: 36px; margin-right: 8px; border: 2px solid transparent; border-radius: 9px; color: #e6e6e6; }
.chip.act { background: #545454; border-color: #6c6c6c; }
.chip svg { width: 30px; height: 30px; }
.chip .icon { width: 28px; height: 28px; }
.chip.orange { color: #c28350; }
.chip.green { margin: 0 0 0 40px; color: #0ab68b; }
.toggles { display: flex; align-items: center; gap: 12px; margin-left: auto; padding-bottom: 1px; color: #e6e6e6; }
.toggles input { appearance: none; width: 20px; height: 20px; margin-right: 3px; border-radius: 2px; background: #e6e6e6; }
.toggles input:checked::after { content: ""; display: block; width: 13px; height: 7px; margin: 5px 0 0 4px; border: 3px solid #1d1d1d; border-width: 0 0 3px 3px; transform: rotate(-48deg); }

.properties { display: flex; flex: 1; flex-direction: column; min-height: 0; background: #303030; border-radius: 12px 12px 0 0; }
.properties .phead { flex: none; height: 54px; padding: 4px 14px 0 16px; }
.properties .box { width: 64px; background: #303030; }
.properties .box:last-child { width: 38px; padding-left: 11px; }
.properties .searchbox { margin-left: 46px; }
.pbody { display: flex; flex: 1; min-height: 0; }
.ptabs { display: flex; flex-direction: column; gap: 28px; width: 57px; padding: 41px 0 0 17px; background: #1d1d1d; color: #b4b4b4; }
.pcontent { display: flex; flex: 1; flex-direction: column; padding: 16px 3px 0 16px; }
.ppin { align-self: flex-end; margin-bottom: 40px; color: #999; }
.scroll { width: 6px; margin: 16px 4px 0 1px; border-radius: 3px 3px 0 0; background: #444; }
.field { display: flex; flex: none; height: 40px; border: 2px solid #3d3d3d; border-radius: 9px; background: #1d1d1d; overflow: hidden; }
.field input { flex: 1; padding-left: 16px; }
.panel { flex: none; height: 40px; margin-top: 20px; border-radius: 8px; background: #3d3d3d; }

.tip { position: absolute; top: 580px; right: 32px; padding: 15px 30px 14px 22px; background: #1d1d1d; border-radius: 8px; box-shadow: 0 0 0 2px #252525, 0 4px 8px rgba(0, 0, 0, .5); line-height: 30px; color: #dadada; white-space: nowrap; }
.tip p + p { margin-top: 5px; }
.tip .dim { color: #999; }
.headline { position: absolute; top: 119px; left: 680px; width: 1560px; height: 330px; font-size: 111px; font-weight: 700; fill: #ff2e6e; stroke: #fff; stroke-width: 18px; stroke-linejoin: round; paint-order: stroke fill; filter: drop-shadow(0 3px 3px rgba(0, 0, 0, .5)); pointer-events: none; }
.jp { font-family: "Noto Sans CJK JP", sans-serif; font-size: 96px; }
.arrow { position: absolute; top: 296px; right: 671px; width: 180px; height: 164px; filter: drop-shadow(0 2px 2px rgba(0, 0, 0, .5)); pointer-events: none; }
.mark { position: absolute; top: 486px; right: 463px; width: 210px; height: 149px; border: 14px solid #ff2e6e; border-radius: 7px; pointer-events: none; }
</style>
